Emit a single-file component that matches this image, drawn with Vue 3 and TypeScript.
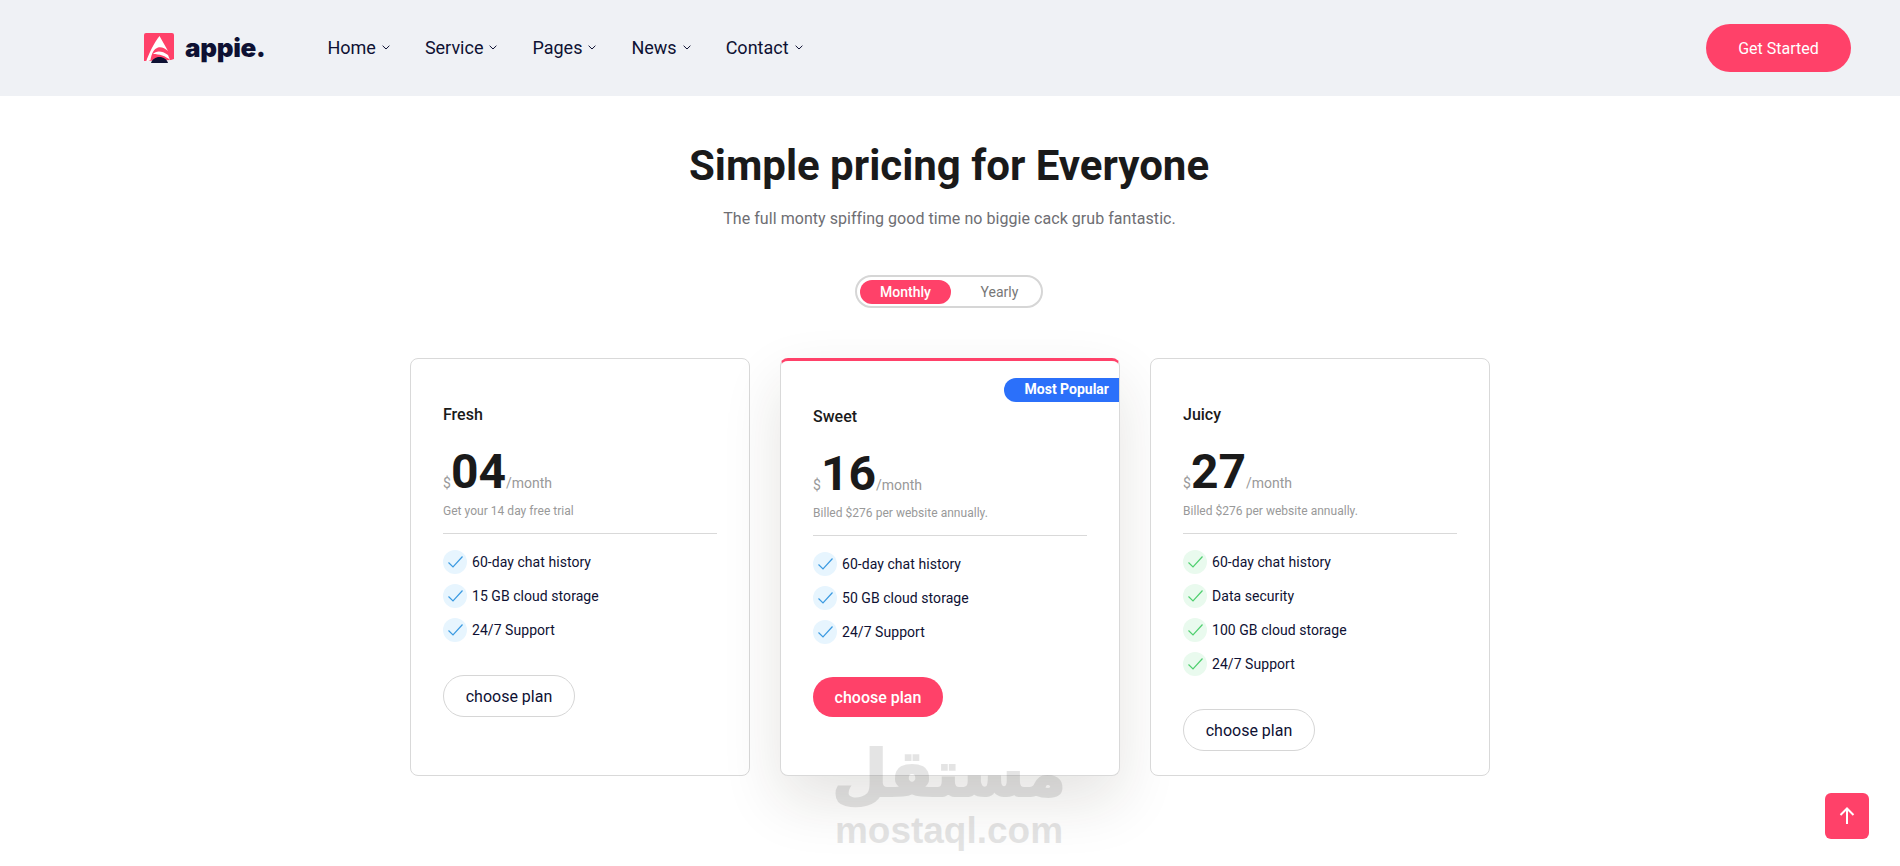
<script setup lang="ts">
interface Plan {
  name: string
  currency: string
  price: string
  note: string
  features: string[]
  tone: 'blue' | 'green'
  featured?: boolean
}

const navItems: string[] = ['Home', 'Service', 'Pages', 'News', 'Contact']

const plans: Plan[] = [
  {
    name: 'Fresh',
    currency: '$',
    price: '04',
    note: 'Get your 14 day free trial',
    features: ['60-day chat history', '15 GB cloud storage', '24/7 Support'],
    tone: 'blue',
  },
  {
    name: 'Sweet',
    currency: '$',
    price: '16',
    note: 'Billed $276 per website annually.',
    features: ['60-day chat history', '50 GB cloud storage', '24/7 Support'],
    tone: 'blue',
    featured: true,
  },
  {
    name: 'Juicy',
    currency: '$',
    price: '27',
    note: 'Billed $276 per website annually.',
    features: ['60-day chat history', 'Data security', '100 GB cloud storage', '24/7 Support'],
    tone: 'green',
  },
]
</script>

<template>
  <div class="page">
    <header class="topbar">
      <a class="brand">
        <svg class="brand-mark" width="30" height="30" viewBox="0 0 30 30">
          <path d="M2 0h26a2 2 0 0 1 2 2v24l-3 1-27 1V2a2 2 0 0 1 2-2z" fill="#ff4169" />
          <path d="M15.500 3 24 18c-3-3-7-4.500-10-3.500-4 1.300-6.500 6-7.500 12.500L2 29C5 20 10 10 15.500 3z" fill="#fff" />
          <path d="M9 21c3-3.500 9-3.500 15 1l2 5c-4-4-11-6-17-6z" fill="#fff" />
          <path d="M7 30c1-3.500 4.500-6 8.500-6s7.500 2.500 8.500 6z" fill="#0e1133" />
          <path d="M0 28h7l-1 2H0zM24 28h6v2h-6z" fill="#eff1f5" />
        </svg>
        <span class="brand-name">appie.</span>
      </a>
      <nav class="menu">
        <a v-for="item in navItems" :key="item" class="menu-item">
          {{ item }}
          <svg width="8" height="5" viewBox="0 0 8 5">
            <path d="M.6.7 4 4 7.400.7" fill="none" stroke="#0e1133" stroke-width="1" />
          </svg>
        </a>
      </nav>
      <button class="start" type="button">Get Started</button>
    </header>

    <main class="pricing">
      <h2 class="title">Simple pricing for Everyone</h2>
      <p class="lead">The full monty spiffing good time no biggie cack grub fantastic.</p>

      <div class="switch">
        <span class="switch-on">Monthly</span>
        <span class="switch-off">Yearly</span>
      </div>

      <div class="plans">
        <article
          v-for="plan in plans"
          :key="plan.name"
          class="plan"
          :class="{ featured: plan.featured }"
        >
          <span v-if="plan.featured" class="badge">Most Popular</span>
          <h3 class="plan-name">{{ plan.name }}</h3>
          <div class="price">
            <span class="currency">{{ plan.currency }}</span>
            <span class="amount">{{ plan.price }}</span>
            <span class="period">/month</span>
          </div>
          <p class="note">{{ plan.note }}</p>
          <ul class="features">
            <li v-for="feature in plan.features" :key="feature" class="feature">
              <span class="tick" :class="plan.tone">
                <svg width="15" height="12" viewBox="0 0 15 12">
                  <path d="M.5 6.500 5 11 14.500.5" fill="none" stroke="currentColor" stroke-width="1.200" />
                </svg>
              </span>
              {{ feature }}
            </li>
          </ul>
          <button class="choose" type="button">choose plan</button>
        </article>
      </div>
    </main>

    <div class="watermark">
      <span class="watermark-ar" lang="ar" dir="rtl">مستقل</span>
      <span class="watermark-en">mostaql.com</span>
    </div>

    <button class="to-top" type="button" aria-label="Back to top">
      <svg width="16" height="18" viewBox="0 0 16 18">
        <path d="M8 17V2M1.500 8 8 1.500 14.500 8" fill="none" stroke="#fff" stroke-width="2" />
      </svg>
    </button>
  </div>
</template>

<style>
html,
body {
  margin: 0;
  background: #fff;
}
</style>

<style scoped>
.page {
  position: relative;
  height: 866px;
  overflow: hidden;
  font-family: Roboto, 'Liberation Sans', sans-serif;
  color: #0e1133;
}

.topbar {
  display: flex;
  align-items: center;
  height: 96px;
  padding: 0 49px 0 144px;
  background: #eff1f5;
}

.brand {
  display: flex;
  align-items: center;
  gap: 11px;
}

.brand-name {
  margin-top: -2px;
  font-family: Inter, Roboto, sans-serif;
  font-size: 26px;
  font-weight: 900;
  letter-spacing: -0.3px;
  color: #0e1133;
}

.menu {
  display: flex;
  gap: 35px;
  margin-left: 62px;
}

.menu-item {
  display: flex;
  align-items: center;
  gap: 6px;
  margin-top: -1px;
  font-size: 18px;
  font-weight: 400;
  color: #0e1133;
}

.start {
  width: 145px;
  height: 48px;
  margin-left: auto;
  border: 0;
  border-radius: 24px;
  background: #ff4169;
  color: #fff;
  font-family: inherit;
  font-size: 16px;
  font-weight: 400;
}

.pricing {
  display: flex;
  flex-direction: column;
  align-items: center;
}

.title {
  margin: 46px 2px 0 0;
  font-size: 42px;
  line-height: 48px;
  font-weight: 700;
  color: #1a1a1a;
}

.lead {
  margin: 16px 1px 0 0;
  font-size: 16px;
  line-height: 26px;
  letter-spacing: 0.05px;
  color: #6e6e73;
}

.switch {
  display: flex;
  align-items: center;
  width: 188px;
  height: 33px;
  margin: 43px 2px 0 0;
  padding: 0 3px;
  box-sizing: border-box;
  border: 2px solid #d6d6d6;
  border-radius: 17px;
  font-size: 14px;
  font-weight: 500;
}

.switch-on {
  width: 91px;
  height: 24px;
  border-radius: 12px;
  background: #ff4169;
  color: #fff;
  text-align: center;
  line-height: 24px;
}

.switch-off {
  flex: 1;
  padding-left: 10px;
  text-align: center;
  color: #777;
  font-weight: 400;
}

.plans {
  display: grid;
  grid-template-columns: repeat(3, 340px);
  gap: 30px;
  margin-top: 50px;
}

.plan {
  position: relative;
  height: 418px;
  padding: 46px 32px 0;
  box-sizing: border-box;
  border: 1px solid #d9d9d9;
  border-radius: 8px;
  background: #fff;
}

.featured {
  border-top: 3px solid #ff4169;
  box-shadow: 0 25px 60px rgba(40, 30, 20, 0.12);
}

.badge {
  position: absolute;
  top: 17px;
  right: 0;
  width: 115px;
  height: 24px;
  padding-right: 10px;
  box-sizing: border-box;
  border-radius: 12px 0 0 12px;
  background: #2b70fa;
  color: #fff;
  font-size: 14px;
  font-weight: 700;
  line-height: 22px;
  text-align: right;
}

.plan-name {
  margin: 0;
  font-size: 16px;
  line-height: 20px;
  font-weight: 500;
  color: #1a1a1a;
}

.price {
  display: flex;
  align-items: baseline;
  margin-top: 18px;
  height: 58px;
}

.currency {
  font-size: 14px;
  color: #999;
}

.amount {
  font-size: 48px;
  line-height: 58px;
  font-weight: 700;
  color: #1a1a1a;
}

.period {
  font-size: 14px;
  color: #999;
}

.note {
  margin: 2px 0 0;
  padding-bottom: 14px;
  border-bottom: 1px solid #d9d9d9;
  font-size: 12px;
  line-height: 16px;
  letter-spacing: 0.03px;
  color: #999;
}

.features {
  margin: 16px 0 0;
  padding: 0;
  list-style: none;
}

.feature {
  display: flex;
  align-items: center;
  gap: 5px;
  height: 24px;
  margin-bottom: 10px;
  font-size: 14px;
  letter-spacing: 0.05px;
  color: #0e1133;
}

.tick {
  display: flex;
  align-items: center;
  justify-content: center;
  width: 24px;
  height: 24px;
  border-radius: 50%;
}

.tick.blue {
  background: #e7f5fe;
  color: #3b9ae1;
}

.tick.green {
  background: #e9faee;
  color: #4fcf6f;
}

.choose {
  display: block;
  width: 132px;
  height: 42px;
  margin-top: 33px;
  border: 1px solid #d6d6d6;
  border-radius: 21px;
  background: #fff;
  color: #0e1133;
  font-family: inherit;
  font-size: 16px;
  font-weight: 400;
}

.featured .choose {
  width: 130px;
  height: 40px;
  border: 0;
  background: #ff4169;
  color: #fff;
  font-weight: 500;
}

.watermark {
  position: absolute;
  left: 836px;
  top: 738px;
  width: 226px;
  display: flex;
  flex-direction: column;
  align-items: center;
  pointer-events: none;
  color: #000;
  opacity: 0.1;
}

.watermark-ar {
  font-family: 'DejaVu Sans', sans-serif;
  font-size: 64px;
  line-height: 72px;
  font-weight: 700;
  -webkit-text-stroke: 2px #000;
}

.watermark-en {
  font-family: 'Liberation Sans', sans-serif;
  font-size: 37px;
  line-height: 42px;
  font-weight: 700;
}

.to-top {
  position: absolute;
  left: 1825px;
  top: 793px;
  display: flex;
  align-items: center;
  justify-content: center;
  width: 44px;
  height: 46px;
  border: 0;
  border-radius: 6px;
  background: #ff4169;
}
</style>
